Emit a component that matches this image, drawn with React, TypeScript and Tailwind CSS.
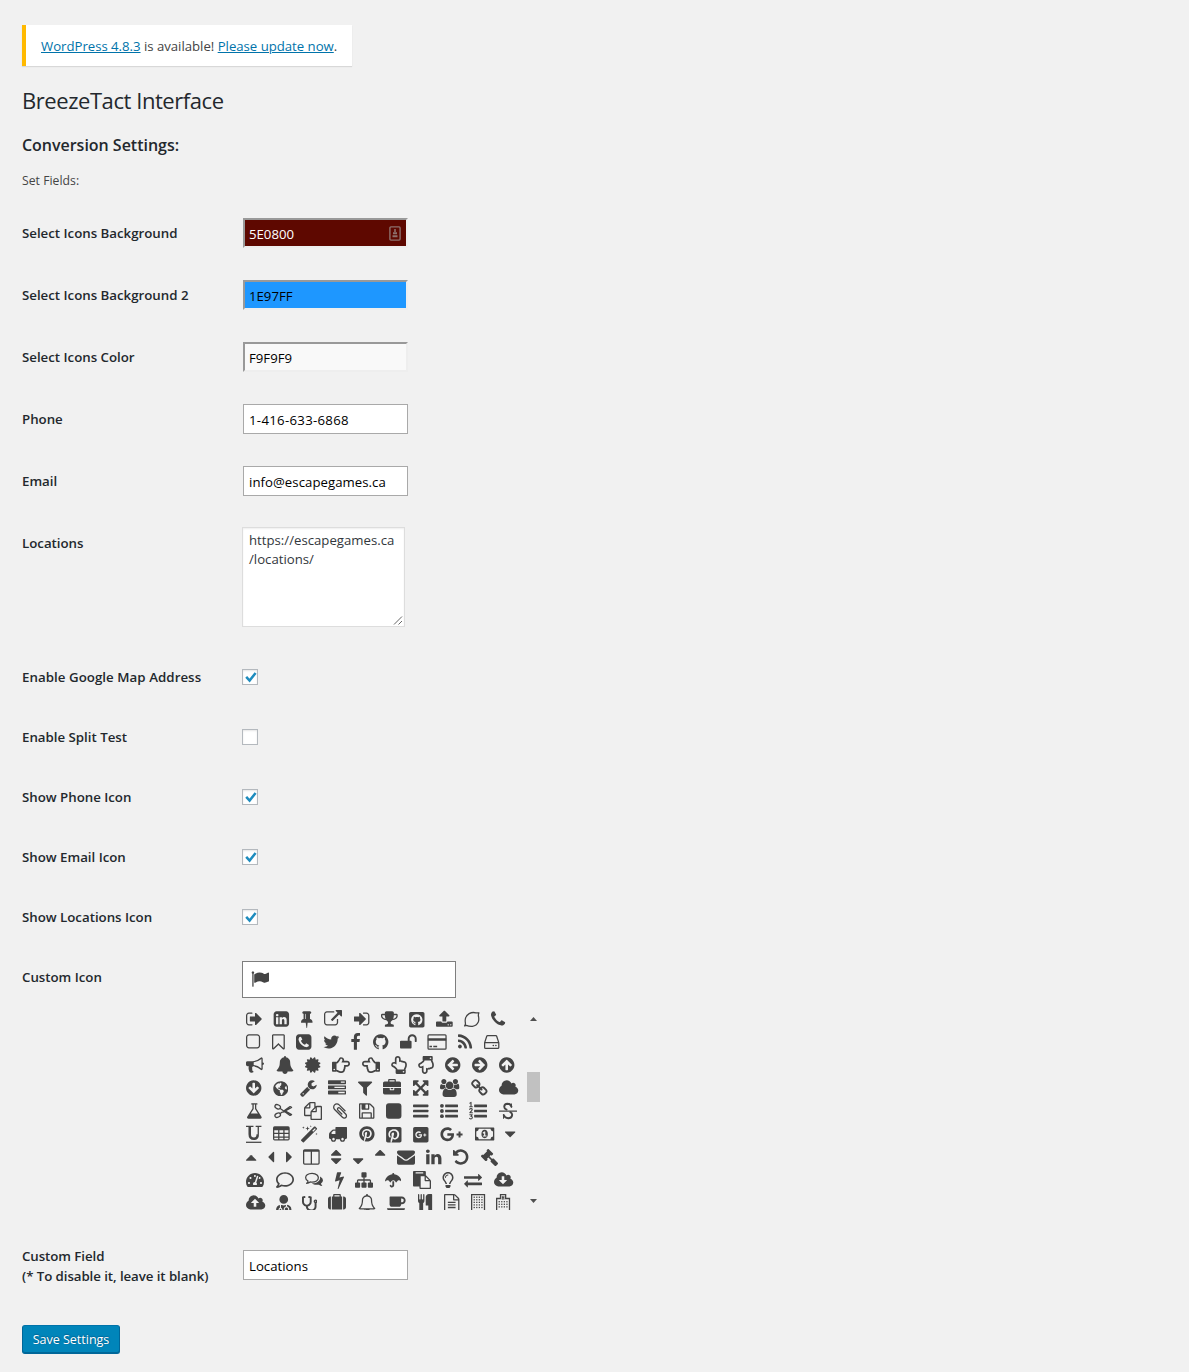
import React from "react";
import {
  FaGithubSquare, FaRegHandPointRight, FaRegHandPointLeft, FaRegHandPointUp, FaRegHandPointDown,
  FaGlobeAmericas, FaPinterest, FaPinterestSquare, FaGooglePlusSquare, FaGooglePlusG, FaGavel,
  FaTachometerAlt, FaRegComment, FaUmbrella, FaRegLightbulb, FaUserMd, FaStethoscope,
} from "react-icons/fa";

type Glyph = { w: number; x?: number; d?: string; node?: React.ReactNode; lib?: React.ReactNode };

const UNIT = 18 / 1792;
const CIRCLE = "M1664 896q0 209-103 385.5t-279.5 279.5-385.500 103-385.500-103-279.500-279.500-103-385.500 103-385.500 279.500-279.500 385.500-103 385.500 103 279.500 279.500 103 385.500z";
const CIRCLE_ARROW = "M1408 960v-128q0-26-19-45t-45-19h-502l189-189q19-19 19-45t-19-45l-91-91q-18-18-45-18t-45 18l-362 362-91 91q-18 18-18 45t18 45l91 91 362 362q18 18 45 18t45-18l91-91q18-18 18-45t-18-45l-189-189h502q26 0 45-19t19-45z" + CIRCLE;
const circleArrow = (deg: number): Glyph => ({ w: 1536, node: <path fillRule="evenodd" d={CIRCLE_ARROW} transform={`rotate(${deg} 896 896)`} /> });
const CLOUD = "M1856 1152q0 159-112.5 271.5t-271.5 112.5h-1088q-185 0-316.5-131.5t-131.5-316.5q0-130 70-240t188-165q-2-30-2-43 0-212 150-362t362-150q156 0 285.500 87t188.500 231q71-62 166-62 106 0 181 75t75 181q0 76-41 138 130 31 213.500 135.500t83.500 238.500z";
const SORT_DOWN = "M1408 1088q0 26-19 45l-448 448q-19 19-45 19t-45-19l-448-448q-19-19-19-45t19-45 45-19h896q26 0 45 19t19 45z";
const SORT_UP = "M1408 704q0 26-19 45t-45 19h-896q-26 0-45-19t-19-45 19-45l448-448q19-19 45-19t45 19l448 448q19 19 19 45z";
const FLAG = "M320 256q0 72-64 110v1266q0 13-9.5 22.5t-22.5 9.5h-64q-13 0-22.5-9.5t-9.5-22.5v-1266q-64-38-64-110 0-53 37.5-90.5t90.500-37.500 90.500 37.500 37.500 90.500zm1472 64v763q0 25-12.500 38.500t-39.500 27.500q-215 116-369 116-61 0-123.500-22t-108.500-48-115.500-48-142.500-22q-192 0-464 146-17 9-33 9-26 0-45-19t-19-45v-742q0-32 31-55 21-14 79-43 236-120 421-120 107 0 200 29t219 88q38 19 88 19 54 0 117.500-21t110-47 88-47 54.500-21q26 0 45 19t19 45z";
const BELL_BODY = "M1728 1408q0 52-38 90t-90 38h-448q0 106-75 181t-181 75-181-75-75-181h-448q-52 0-90-38t-38-90q50-42 91-88t85-119.5 74.5-158.5 50-206 19.5-260q0-152 117-282.5t307-158.5q-8-19-8-39 0-40 28-68t68-28 68 28 28 68q0 20-8 39 190 28 307 158.5t117 282.5q0 139 19.5 260t50 206 74.5 158.5 85 119.5 91 88z";
const BELL_CLAPPER = "M912 1696q0-16-16-16-59 0-101.5-42.5t-42.5-101.5q0-16-16-16t-16 16q0 73 51.5 124.5t124.5 51.5q16 0 16-16z";
const stroke = { fill: "none", stroke: "currentColor", strokeWidth: 125, strokeLinejoin: "round" as const, strokeLinecap: "round" as const };

const windows = (xs: number[], ys: number[]) =>
  ys.flatMap((y) => xs.map((x) => <rect key={`${x}-${y}`} x={x} y={y} width="128" height="128" />));

const rows: Glyph[][] = [
  [
    { w: 1568, x: 64, d: "M704 1440q0 4 1 20t.5 26.5-3 23.5-10 19.5-20.5 6.5h-320q-119 0-203.5-84.5t-84.5-203.5v-704q0-119 84.5-203.5t203.5-84.5h320q13 0 22.5 9.5t9.5 22.5q0 4 1 20t.5 26.5-3 23.5-10 19.5-20.5 6.5h-320q-66 0-113 47t-47 113v704q0 66 47 113t113 47h312l11.5 1 11.5 3 8 5.5 7 9 2 13.500zm928-544q0 26-19 45l-544 544q-19 19-45 19t-45-19-19-45v-288h-448q-26 0-45-19t-19-45v-384q0-26 19-45t45-19h448v-288q0-26 19-45t45-19 45 19l544 544q19 19 19 45z" },
    { w: 1600, x: 64, d: "M365 1414h231v-694h-231v694zm246-908q-1-52-36-86t-93-34-94.5 34-36.5 86q0 51 35.5 85.5t92.5 34.5h1q59 0 95-34.5t36-85.5zm585 908h231v-398q0-154-73-233t-193-79q-136 0-209 117h2v-101h-231q3 66 0 694h231v-388q0-38 7-56 15-35 45-59.5t74-24.5q116 0 116 157v371zm468-998v960q0 119-84.5 203.5t-203.500 84.500h-960q-119 0-203.500-84.500t-84.500-203.500v-960q0-119 84.500-203.500t203.500-84.500h960q119 0 203.500 84.500t84.500 203.500z" },
    { w: 1152, d: "M800 864v-448q0-14-9-23t-23-9-23 9-9 23v448q0 14 9 23t23 9 23-9 9-23zm672 352q0 26-19 45t-45 19h-429l-51 483q-2 12-10.5 20.5t-20.500 8.500h-1q-27 0-32-27l-76-485h-404q-26 0-45-19t-19-45q0-123 78.500-221.500t177.500-98.500v-512q-52 0-90-38t-38-90 38-90 90-38h640q52 0 90 38t38 90-38 90-90 38v512q99 0 177.500 98.500t78.500 221.500z" },
    { w: 1792, d: "M1408 928v320q0 119-84.5 203.5t-203.5 84.5h-832q-119 0-203.500-84.500t-84.500-203.500v-832q0-119 84.500-203.500t203.500-84.500h704q14 0 23 9t9 23v64q0 14-9 23t-23 9h-704q-66 0-113 47t-47 113v832q0 66 47 113t113 47h832q66 0 113-47t47-113v-320q0-14 9-23t23-9h64q14 0 23 9t9 23zm384-864v512q0 26-19 45t-45 19-45-19l-176-176-652 652q-10 10-23 10t-23-10l-114-114q-10-10-10-23t10-23l652-652-176-176q-19-19-19-45t19-45 45-19h512q26 0 45 19t19 45z" },
    { w: 1536, d: "M1312 896q0 26-19 45l-544 544q-19 19-45 19t-45-19-19-45v-288h-448q-26 0-45-19t-19-45v-384q0-26 19-45t45-19h448v-288q0-26 19-45t45-19 45 19l544 544q19 19 19 45zm352-352v704q0 119-84.5 203.5t-203.5 84.5h-320q-13 0-22.5-9.5t-9.500-22.500q0-4-1-20t-.5-26.5 3-23.500 10-19.500 20.500-6.500h320q66 0 113-47t47-113v-704q0-66-47-113t-113-47h-312l-11.500-1-11.500-3-8-5.500-7-9-2-13.500q0-4-1-20t-.5-26.500 3-23.500 10-19.500 20.500-6.500h320q119 0 203.500 84.500t84.500 203.500z" },
    { w: 1664, d: "M522 883q-74-162-74-371h-256v96q0 78 94.5 162t235.5 113zm1078-275v-96h-256q0 209-74 371 141-29 235.5-113t94.5-162zm128-128v128q0 71-41.5 143t-112 130-173 97.5-215.5 44.5q-42 54-95 95-38 34-52.5 72.500t-14.500 89.500q0 54 30.500 91t97.500 37q75 0 133.500 45.500t58.500 114.500v64q0 14-9 23t-23 9h-832q-14 0-23-9t-9-23v-64q0-69 58.500-114.500t133.500-45.500q67 0 97.500-37t30.500-91q0-51-14.500-89.500t-52.500-72.500q-53-41-95-95-113-5-215.500-44.500t-173-97.500-112-130-41.500-143v-128q0-40 28-68t68-28h288v-96q0-66 47-113t113-47h576q66 0 113 47t47 113v96h288q40 0 68 28t28 68z" },
    { w: 1536, lib: <FaGithubSquare size={17.6} /> },
    { w: 1664, d: "M1344 1472q0-26-19-45t-45-19-45 19-19 45 19 45 45 19 45-19 19-45zm256 0q0-26-19-45t-45-19-45 19-19 45 19 45 45 19 45-19 19-45zm128-224v320q0 40-28 68t-68 28h-1472q-40 0-68-28t-28-68v-320q0-40 28-68t68-28h427q21 56 70.500 92t110.500 36h256q61 0 110.500-36t70.500-92h427q40 0 68 28t28 68zm-325-648q-17 40-59 40h-256v448q0 26-19 45t-45 19h-256q-26 0-45-19t-19-45v-448h-256q-42 0-59-40-17-39 14-69l448-448q18-19 45-19t45 19l448 448q31 30 14 69z" },
    { w: 1536, node: <path {...stroke} d="M190 1590q90-70 180-60q250 110 600 90q420-50 580-420q100-300 10-600q-20-140 50-330q-120 50-290 10q-370-90-680 80q-300 170-370 500q-50 220 0 450q10 150-80 280z" /> },
    { w: 1408, d: "M1600 1240q0 27-10 70.5t-21 68.5q-21 50-122 106-94 51-186 51-27 0-53-3.5t-57.500-12.500-47-14.500-55.500-20.500-49-18q-98-35-175-83-127-79-264-216t-216-264q-48-77-83-175-3-9-18-49t-20.500-55.500-14.500-47-12.500-57.500-3.500-53q0-92 51-186 56-101 106-122 25-11 68.500-21t70.500-10q14 0 21 3 18 6 53 76 11 19 30 54t35 63.500 31 53.500q3 4 17.500 25t21.500 35.500 7 28.500q0 20-28.500 50t-62 55-62 53-28.500 46q0 9 5 22.500t8.500 20.500 14 24 11.500 19q76 137 174 235t235 174q2 1 19 11.500t24 14 20.500 8.500 22.500 5q18 0 46-28.500t53-62 55-62 50-28.500q14 0 28.500 7t35.500 21.500 25 17.500q25 15 53.500 31t63.500 35 54 30q70 35 76 53 3 7 3 21z" },
  ],
  [
    { w: 1408, d: "M1312 256h-832q-66 0-113 47t-47 113v832q0 66 47 113t113 47h832q66 0 113-47t47-113v-832q0-66-47-113t-113-47zm288 160v832q0 119-84.5 203.5t-203.5 84.5h-832q-119 0-203.500-84.500t-84.500-203.500v-832q0-119 84.500-203.500t203.500-84.500h832q119 0 203.500 84.500t84.500 203.500z" },
    { w: 1280, d: "M1408 256h-1024v1242l423-406 89-85 89 85 423 406v-1242zm12-128q23 0 44 9 33 13 52.5 41t19.5 62v1289q0 34-19.5 62t-52.5 41q-19 8-44 8-48 0-83-32l-441-424-441 424q-36 33-83 33-23 0-44-9-33-13-52.500-41t-19.500-62v-1289q0-34 19.500-62t52.500-41q21-9 44-9h1048z" },
    { w: 1536, d: "M1408 1193q0-11-2-16t-18-16.5-40.500-25-47.500-26.500-45.500-25-28.500-15q-5-3-19-13t-25-15-21-5q-15 0-36.500 20.500t-39.500 45-38.500 45-33.500 20.500q-7 0-16.500-3.500t-15.500-6.500-17-9.500-14-8.500q-99-55-170-126.500t-127-170.500q-2-3-8.500-14t-9.500-17-6.500-15.500-3.500-16.500q0-13 20.500-33.500t45-38.500 45-39.500 20.500-36.500q0-10-5-21t-15-25-13-19q-3-6-15-28.500t-25-45.500-26.500-47.500-25-40.500-16.500-18-16-2q-48 0-101 22-46 21-80 94.500t-34 130.500q0 16 2.500 34t5 30.500 9 33 10 29.500 12.500 33 11 30q60 164 216.500 320.500t320.500 216.500q6 2 30 11t33 12.500 29.500 10 33 9 30.500 5 34 2.500q57 0 130.500-34t94.500-80q22-53 22-101zm256-777v960q0 119-84.500 203.500t-203.500 84.500h-960q-119 0-203.500-84.500t-84.500-203.500v-960q0-119 84.500-203.500t203.500-84.500h960q119 0 203.500 84.500t84.500 203.500z" },
    { w: 1664, d: "M1684 408q-67 98-162 167 1 14 1 42 0 130-38 259.500t-115.500 248.500-184.500 210.500-258 146-323 54.500q-271 0-496-145 35 4 78 4 225 0 401-138-105-2-188-64.500t-114-159.500q33 5 61 5 43 0 85-11-112-23-185.500-111.500t-73.500-205.500v-4q68 38 146 41-66-44-105-115t-39-154q0-88 44-163 121 149 294.500 238.500t371.500 99.500q-8-38-8-74 0-134 94.500-228.500t228.500-94.500q140 0 236 102 109-21 205-78-37 115-142 178 93-10 186-50z" },
    { w: 1024, x: 448, d: "M1343 12v264h-157q-86 0-116 36t-30 108v189h293l-39 296h-254v759h-306v-759h-255v-296h255v-218q0-186 104-288.5t277-102.5q147 0 228 12z" },
    { w: 1536, d: "M896 128q209 0 385.5 103t279.5 279.5 103 385.5q0 251-146.5 451.5t-378.5 277.5q-27 5-40-7t-13-30q0-3 .5-76.5t.5-134.5q0-97-52-142 57-6 102.5-18t94-39 81-66.5 53-105 20.5-150.5q0-119-79-206 37-91-8-204-28-9-81 11t-92 44l-38 24q-93-26-192-26t-192 26q-16-11-42.5-27t-83.500-38.500-85-13.500q-45 113-8 204-79 87-79 206 0 85 20.500 150t52.500 105 80.500 67 94 39 102.500 18q-39 36-49 103-21 10-45 15t-57 5-65.500-21.500-55.500-62.500q-19-32-48.500-52t-49.500-24l-20-3q-21 0-29 4.500t-5 11.500 9 14 13 12l7 5q22 10 43.500 38t31.500 51l10 23q13 38 44 61.500t67 30 69.500 7 55.500-3.500l23-4q0 38 .5 88.500t.5 54.500q0 18-13 30t-40 7q-232-77-378.500-277.500t-146.500-451.500q0-209 103-385.500t279.500-279.500 385.500-103z" },
    { w: 1664, x: 0, d: "M1664 576v256q0 26-19 45t-45 19h-64q-26 0-45-19t-19-45v-256q0-106-75-181t-181-75-181 75-75 181v192h96q40 0 68 28t28 68v576q0 40-28 68t-68 28h-960q-40 0-68-28t-28-68v-576q0-40 28-68t68-28h672v-192q0-185 131.500-316.500t316.500-131.500 316.500 131.500 131.500 316.500z" },
    { w: 1820, node: <><rect x="-10" y="192" width="1792" height="1408" rx="90" {...stroke} /><path d="M-30 512h1832v256H-30zM128 1280h256v128H128zM512 1280h384v128H512z" /></> },
    { w: 1408, d: "M576 1344q0 80-56 136t-136 56-136-56-56-136 56-136 136-56 136 56 56 136zm512 123q2 28-17 48-18 21-47 21h-135q-25 0-43-16.5t-20-41.5q-22-229-184.5-391.5t-391.500-184.500q-25-2-41.500-20t-16.500-43v-135q0-29 21-47 17-17 43-17h5q160 13 306 80.500t259 181.500q114 113 181.500 259t80.500 306zm512 2q2 27-18 47-18 20-46 20h-143q-26 0-44.500-17.500t-19.500-42.500q-12-215-101-408.500t-231.500-336-336-231.500-408.500-102q-25-1-42.500-19.500t-17.500-43.500v-143q0-28 20-46 18-18 44-18h3q262 13 501.500 120t425.500 294q187 186 294 425.500t120 501.500z" },
    { w: 1536, node: <><path {...stroke} d="M192 960l210-640q20-64 90-64h808q70 0 90 64l210 640v480q0 96-96 96H288q-96 0-96-96zM192 960h1408" /><circle cx="1056" cy="1248" r="80" /><circle cx="1312" cy="1248" r="80" /></> },
  ],
  [
    { w: 1792, d: "M1664 640q53 0 90.5 37.5t37.5 90.5-37.5 90.5-90.5 37.5v384q0 52-38 90t-90 38q-417-347-812-380-58 19-91 66t-31 100.5 40 92.5q-20 33-23 65.5t6 58 33.5 55 48 50 61.5 50.500q-29 58-111.500 83t-168.500 11.500-132-55.500q-7-23-29.500-87.500t-32-94.500-23-89-15-101 3.500-98.500 22-110.500h-122q-66 0-113-47t-47-113v-192q0-66 47-113t113-47h480q435 0 896-384 52 0 90 38t38 90v384zm-128 604v-954q-394 302-768 343v270q377 42 768 341z" },
    { w: 1792, d: BELL_BODY },
    { w: 1536, d: "M1504 896l138 135q30 28 20 70-12 41-52 51l-188 48 53 186q12 41-19 70-29 31-70 19l-186-53-48 188q-10 40-51 52-12 2-19 2-31 0-51-22l-135-138-135 138q-28 30-70 20-41-11-51-52l-48-188-186 53q-41 12-70-19-31-29-19-70l53-186-188-48q-40-10-52-51-10-42 20-70l138-135-138-135q-30-28-20-70 12-41 52-51l188-48-53-186q-12-41 19-70 29-31 70-19l186 53 48-188q10-41 51-51 41-12 70 19l135 139 135-139q29-30 70-19 41 10 51 51l48 188 186-53q41-12 70 19 31 29 19 70l-53 186 188 48q40 10 52 51 10 42-20 70z" },
    { w: 1792, lib: <FaRegHandPointRight size={18} /> },
    { w: 1792, lib: <FaRegHandPointLeft size={18} /> },
    { w: 1536, lib: <FaRegHandPointUp size={18} /> },
    { w: 1536, lib: <FaRegHandPointDown size={18} /> },
    circleArrow(0), circleArrow(180), circleArrow(90),
  ],
  [
    circleArrow(270),
    { w: 1536, lib: <FaGlobeAmericas size={15.6} /> },
    { w: 1664, d: "M448 1472q0-26-19-45t-45-19-45 19-19 45 19 45 45 19 45-19 19-45zm644-420l-682 682q-37 37-90 37-52 0-91-37l-106-108q-38-36-38-90 0-53 38-91l681-681q39 98 114.5 173.5t173.5 114.5zm634-435q0 39-23 106-47 134-164.5 217.5t-258.5 83.500q-185 0-316.500-131.500t-131.500-316.500 131.500-316.500 316.500-131.500q58 0 121.500 16.500t107.500 46.500q16 11 16 28t-16 28l-293 169v224l193 107q5-3 79-48.500t135.500-81 70.500-35.500q15 0 23.500 10t8.500 25z" },
    { w: 1792, d: "M1024 1408h640v-128h-640v128zm-384-512h1024v-128h-1024v128zm640-512h384v-128h-384v128zm512 832v256q0 26-19 45t-45 19h-1664q-26 0-45-19t-19-45v-256q0-26 19-45t45-19h1664q26 0 45 19t19 45zm0-512v256q0 26-19 45t-45 19h-1664q-26 0-45-19t-19-45v-256q0-26 19-45t45-19h1664q26 0 45 19t19 45zm0-512v256q0 26-19 45t-45 19h-1664q-26 0-45-19t-19-45v-256q0-26 19-45t45-19h1664q26 0 45 19t19 45z" },
    { w: 1408, d: "M1595 295q17 41-14 70l-493 493v742q0 42-39 59-13 5-25 5-27 0-45-19l-256-256q-19-19-19-45v-486l-493-493q-31-29-14-70 17-39 59-39h1280q42 0 59 39z" },
    { w: 1792, d: "M640 256h512v-128h-512v128zm1152 640v480q0 66-47 113t-113 47h-1472q-66 0-113-47t-47-113v-480h672v160q0 26 19 45t45 19h320q26 0 45-19t19-45v-160h672zm-768 0v128h-256v-128h256zm768-480v384h-1792v-384q0-66 47-113t113-47h352v-160q0-40 28-68t68-28h576q40 0 68 28t28 68v160h352q66 0 113 47t47 113z" },
    { w: 1536, d: "M1411 541l-355 355 355 355 144-144q29-31 70-14 39 17 39 59v448q0 26-19 45t-45 19h-448q-42 0-59-40-17-39 14-69l144-144-355-355-355 355 144 144q31 30 14 69-17 40-59 40h-448q-26 0-45-19t-19-45v-448q0-42 40-59 39-17 69 14l144 144 355-355-355-355-144 144q-19 19-45 19-12 0-24-5-40-17-40-59v-448q0-26 19-45t45-19h448q42 0 59 40 17 39-14 69l-144 144 355 355 355-355-144-144q-31-30-14-69 17-40 59-40h448q26 0 45 19t19 45v448q0 42-39 59-13 5-25 5-26 0-45-19z" },
    { w: 1920, d: "M529 896q-162 5-265 128h-134q-82 0-138-40.500t-56-118.500q0-353 124-353 6 0 43.500 21t97.500 42.500 119 21.500q67 0 133-23-5 37-5 66 0 159 81 286zm1071 637q0 120-73 189.500t-194 69.500h-874q-121 0-194-69.500t-73-189.500q0-53 3.500-103.500t14-109 26.500-108.500 43-97.500 62-81 85.500-53.500 111.500-20q10 0 43 21.500t73 48 107 48 135 21.500 135-21.500 107-48 73-48 43-21.500q61 0 111.500 20t85.500 53.500 62 81 43 97.500 26.500 108.500 14 109 3.500 103.500zm-1024-1277q0 106-75 181t-181 75-181-75-75-181 75-181 181-75 181 75 75 181zm704 384q0 159-112.500 271.500t-271.500 112.500-271.500-112.500-112.500-271.500 112.500-271.500 271.500-112.500 271.500 112.500 112.500 271.500zm576 225q0 78-56 118.500t-138 40.500h-134q-103-123-265-128 81-127 81-286 0-29-5-66 66 23 133 23 59 0 119-21.500t97.500-42.500 43.500-21q124 0 124 353zm-128-609q0 106-75 181t-181 75-181-75-75-181 75-181 181-75 181 75 75 181z" },
    { w: 1664, d: "M1520 1216q0-40-28-68l-208-208q-28-28-68-28-42 0-72 32 3 3 19 18.500t21.500 21.500 15 19 13 25.500 3.500 27.500q0 40-28 68t-68 28q-15 0-27.500-3.500t-25.500-13-19-15-21.500-21.500-18.500-19q-33 31-33 73 0 40 28 68l206 207q27 27 68 27 40 0 68-26l147-146q28-28 28-67zm-703-705q0-40-28-68l-206-207q-28-28-68-28-39 0-68 27l-147 146q-28 28-28 67 0 40 28 68l208 208q27 27 68 27 42 0 72-31-3-3-19-18.500t-21.500-21.500-15-19-13-25.500-3.500-27.500q0-40 28-68t68-28q15 0 27.500 3.500t25.500 13 19 15 21.500 21.500 18.500 19q33-31 33-73zm895 705q0 120-85 203l-147 146q-83 83-203 83-121 0-204-85l-206-207q-83-83-83-203 0-123 88-209l-88-88q-86 88-208 88-120 0-204-84l-208-208q-84-84-84-204t85-203l147-146q83-83 203-83 121 0 204 85l206 207q83 83 83 203 0 123-88 209l88 88q86-88 208-88 120 0 204 84l208 208q84 84 84 204z" },
    { w: 1920, d: CLOUD },
  ],
  [
    { w: 1664, d: "M1591 1448q56 89 21.5 152.5t-140.5 63.5h-1152q-106 0-140.5-63.5t21.5-152.5l503-793v-399h-64q-26 0-45-19t-19-45 19-45 45-19h512q26 0 45 19t19 45-19 45-45 19h-64v399zm-779-725l-272 429h712l-272-429-20-31v-436h-128v436z" },
    { w: 1792, node: <g {...stroke}><ellipse cx="370" cy="480" rx="290" ry="200" transform="rotate(25 370 480)" /><ellipse cx="370" cy="1312" rx="290" ry="200" transform="rotate(-25 370 1312)" /><path d="M620 640L1600 1340l150-80L1060 850M620 1152L1600 452l150 80L900 1010" /></g> },
    { w: 1792, d: "M1696 384q40 0 68 28t28 68v1216q0 40-28 68t-68 28h-960q-40 0-68-28t-28-68v-288h-544q-40 0-68-28t-28-68v-672q0-40 20-88t48-76l408-408q28-28 76-48t88-20h416q40 0 68 28t28 68v328q68-40 128-40h416zm-544 213l-299 299h299v-299zm-640-384l-299 299h299v-299zm196 647l316-316v-416h-384v416q0 40-28 68t-68 28h-416v640h512v-256q0-40 20-88t48-76zm956 804v-1152h-384v416q0 40-28 68t-68 28h-416v640h896z" },
    { w: 1408, d: "M1596 1385q0 117-79 196t-196 79q-135 0-235-100l-777-776q-113-115-113-271 0-159 110-270t269-111q158 0 273 113l605 606q10 10 10 22 0 16-30.5 46.5t-46.5 30.5q-13 0-23-10l-606-607q-79-77-181-77-106 0-179 75t-73 181q0 105 76 181l776 777q63 63 145 63 64 0 106-42t42-106q0-82-63-145l-581-581q-26-24-60-24-29 0-48 19t-19 48q0 32 25 59l410 410q10 10 10 22 0 16-31 47t-47 31q-12 0-22-10l-410-410q-63-61-63-149 0-82 57-139t139-57q88 0 149 63l581 581q100 98 100 235z" },
    { w: 1536, d: "M512 1536h768v-384h-768v384zm896 0h128v-896q0-14-10-38.500t-20-34.500l-281-281q-10-10-34-20t-39-10v416q0 40-28 68t-68 28h-576q-40 0-68-28t-28-68v-416h-128v1280h128v-416q0-40 28-68t68-28h832q40 0 68 28t28 68v416zm-384-928v-320q0-13-9.500-22.500t-22.500-9.500h-192q-13 0-22.500 9.500t-9.500 22.500v320q0 13 9.500 22.500t22.500 9.500h192q13 0 22.500-9.500t9.500-22.500zm640 32v928q0 40-28 68t-68 28h-1344q-40 0-68-28t-28-68v-1344q0-40 28-68t68-28h928q40 0 88 20t76 48l280 280q28 28 48 76t20 88z" },
    { w: 1536, node: <rect x="128" y="128" width="1536" height="1536" rx="288" /> },
    { w: 1536, node: <>{[256, 768, 1280].map((y) => <rect key={y} x="128" y={y} width="1536" height="256" rx="64" />)}</> },
    { w: 1792, node: <>{[384, 896, 1408].map((y) => <g key={y}><circle cx="192" cy={y} r="192" /><rect x="512" y={y - 128} width="1280" height="256" rx="32" /></g>)}</> },
    { w: 1792, node: <>
      {[384, 896, 1408].map((y) => <rect key={y} x="512" y={y - 128} width="1280" height="256" rx="32" />)}
      <path {...stroke} strokeWidth="110" d="M90 110l110-70v430M70 480h260M70 740q20-90 130-90t120 90q0 80-230 330h250M80 1270h240l-130 160q150 0 140 140q-20 120-140 120q-80 0-130-60" />
    </> },
    { w: 1792, node: <>
      <rect x="0" y="850" width="1792" height="120" rx="32" />
      <path {...stroke} strokeWidth="190" d="M1240 470q-80-300-390-300q-320 10-330 300q0 190 230 290M1130 1010q180 80 180 270q-20 330-410 330q-330 0-430-310" />
      <path d="M1190 150h100v400h-100zM400 1220h100v440H400z" />
    </> },
  ],
  [
    { w: 1536, node: <>
      <rect x="128" y="1660" width="1536" height="125" />
      <path {...stroke} strokeWidth="250" strokeLinecap="butt" d="M500 130v790q0 450 420 450q380 0 380-450" />
      <path {...stroke} strokeWidth="130" strokeLinecap="butt" d="M1350 130v810" />
      <path d="M130 70h740v120H130zM1090 70h574v120h-574z" />
    </> },
    { w: 1664, node: <path fillRule="evenodd" d="M224 128h1344q160 0 160 160v1088q0 160-160 160H224q-160 0-160-160V288q0-160 160-160zM192 512v256h384V512zM704 512v256h384V512zM1216 512v256h384V512zM192 896v256h384V896zM704 896v256h384V896zM1216 896v256h384V896zM192 1280v128h384v-128zM704 1280v128h384v-128zM1216 1280v128h384v-128z" /> },
    { w: 1664, node: <>
      <path fillRule="evenodd" d="M80 1460L1380 160q50-40 100 0l170 170q40 50 0 100L350 1730q-50 40-100 0L80 1560q-40-50 0-100zM1190 580l90 90 260-260-90-90z" />
      <path d="M300 128l30 100 100 30-100 30-30 100-30-100-100-30 100-30zM720 128l60 160 160 60-160 60-60 160-60-160-160-60 160-60zM1040 20l25 80 80 25-80 25-25 80-25-80-80-25 80-25zM1600 760l30 100 100 30-100 30-30 100-30-100-100-30 100-30z" />
    </> },
    { w: 1792, node: <path fillRule="evenodd" d="M640 256q0-64 64-64h1024q64 0 64 64v1024q0 130-192 128a256 256 0 0 1-512 0H704a256 256 0 0 1-512 0q-192 2-192-128V960q0-150 90-240l200-200q50-72 158-72h192zM256 896h384V576H450q-20 0-44 20L270 732q-14 14-14 44zM448 1280a128 128 0 1 0 .1 0zM1344 1280a128 128 0 1 0 .1 0z" /> },
    { w: 1536, lib: <FaPinterest size={15.8} /> },
    { w: 1536, lib: <FaPinterestSquare size={17.6} /> },
    { w: 1536, lib: <FaGooglePlusSquare size={17.6} /> },
    { w: 2304, lib: <FaGooglePlusG size={18.5} className="w-[23px]" /> },
    { w: 1920, node: <>
      <path fillRule="evenodd" d="M0 256h1792q64 0 64 64v1152q0 64-64 64H0q-64 0-64-64V320q0-64 64-64zM320 384Q300 620 64 640v512q236 20 256 256h1152q20-236 256-256V640q-236-20-256-256z" />
      <path fillRule="evenodd" d="M896 480q320 30 320 416t-320 416q-320-30-320-416t320-416zM840 650l-150 130 70 90 80-60v230H720v110h360v-110H960V650z" />
    </> },
    { w: 1024, d: "M1408 704q0 26-19 45l-448 448q-19 19-45 19t-45-19l-448-448q-19-19-19-45t19-45 45-19h896q26 0 45 19t19 45z" },
  ],
  [
    { w: 1024, d: "M1408 1216q0 26-19 45t-45 19h-896q-26 0-45-19t-19-45 19-45l448-448q19-19 45-19t45 19l448 448q19 19 19 45z" },
    { w: 640, x: 600, d: "M1216 448v896q0 26-19 45t-45 19-45-19l-448-448q-19-19-19-45t19-45l448-448q19-19 45-19t45 19 19 45z" },
    { w: 576, x: 576, d: "M1152 896q0 26-19 45l-448 448q-19 19-45 19t-45-19-19-45v-896q0-26 19-45t45-19 45 19l448 448q19 19 19 45z" },
    { w: 1664, d: "M224 1536h608v-1152h-640v1120q0 13 9.5 22.5t22.5 9.5zm1376-32v-1120h-640v1152h608q13 0 22.5-9.5t9.5-22.5zm128-1216v1216q0 66-47 113t-113 47h-1344q-66 0-113-47t-47-113v-1216q0-66 47-113t113-47h1344q66 0 113 47t47 113z" },
    { w: 1024, d: SORT_DOWN + SORT_UP },
    { w: 1024, d: SORT_DOWN },
    { w: 1024, d: SORT_UP },
    { w: 1792, d: "M1792 710v794q0 66-47 113t-113 47h-1472q-66 0-113-47t-47-113v-794q44 49 101 87 362 246 497 345 57 42 92.5 65.5t94.5 48 110 24.5h2q51 0 110-24.5t94.5-48 92.5-65.5q170-123 498-345 57-39 100-87zm0-294q0 79-49 151t-122 123q-376 261-468 325-10 7-42.500 30.500t-54 38-52 32.500-57.500 27-50 9h-2q-23 0-50-9t-57.500-27-52-32.500-54-38-42.500-30.500q-91-64-262-182.500t-205-142.500q-62-42-117-115.500t-55-136.500q0-78 41.500-130t118.500-52h1472q65 0 112.500 47t47.500 113z" },
    { w: 1536, d: "M477 625v991h-330v-991h330zm21-306q1 73-50.5 122t-135.5 49h-2q-82 0-132-49t-50-122q0-74 51.5-122.5t134.5-48.5 133 48.5 51 122.5zm1166 729v568h-329v-530q0-105-40.5-164.5t-126.500-59.500q-63 0-105.500 34.500t-63.500 85.500q-11 30-11 81v553h-329q2-399 2-647t-1-296l-1-48h329v144h-2q20-32 41-56t56.500-52 87-43.500 114.500-15.500q171 0 275 113.500t104 332.500z" },
    { w: 1536, d: "M1664 896q0 156-61 298t-164 245-245 164-298 61q-172 0-327-72.5t-264-204.5q-7-10-6.5-22.5t8.5-20.5l137-138q10-9 25-9 16 2 23 12 73 95 179 147t225 52q104 0 198.5-40.5t163.500-109.500 109.500-163.500 40.500-198.500-40.500-198.500-109.500-163.500-163.500-109.500-198.500-40.500q-98 0-188 35.500t-160 101.500l137 138q31 30 14 69-17 40-59 40h-448q-26 0-45-19t-19-45v-448q0-42 40-59 39-17 69 14l130 129q107-101 244.500-156.500t284.500-55.500q156 0 298 61t245 164 164 245 61 298z" },
    { w: 1792, lib: <FaGavel size={17} className="-scale-x-100" /> },
  ],
  [
    { w: 1792, lib: <FaTachometerAlt size={18} /> },
    { w: 1792, lib: <FaRegComment size={18} /> },
    { w: 1792, node: <>
      <path {...stroke} d="M700 230q330 0 500 170 130 130 130 270 0 200-190 330-170 110-440 110-110 0-190-20-130 110-340 140 110-90 130-230Q64 860 64 670q0-170 150-290 190-150 486-150z" />
      <path d="M1500 540q292 150 292 380 0 190-200 330 30 140 140 240-190-10-350-130-340 50-600-70-60-20-110-60 520 0 740-290 130-170 88-400z" />
    </> },
    { w: 896, x: 448, d: "M1333 566q18 20 7 44l-540 1157q-13 25-42 25-4 0-14-2-17-5-25.5-19t-4.5-30l197-808-406 101q-4 1-12 1-18 0-31-11-18-15-13-39l201-825q4-14 16-23t28-9h328q19 0 32 12.5t13 29.5q0 8-5 18l-171 463 396-98q8-2 12-2 19 0 34 15z" },
    { w: 1792, d: "M1792 1248v320q0 40-28 68t-68 28h-320q-40 0-68-28t-28-68v-320q0-40 28-68t68-28h96v-192h-512v192h96q40 0 68 28t28 68v320q0 40-28 68t-68 28h-320q-40 0-68-28t-28-68v-320q0-40 28-68t68-28h96v-192h-512v192h96q40 0 68 28t28 68v320q0 40-28 68t-68 28h-320q-40 0-68-28t-28-68v-320q0-40 28-68t68-28h96v-192q0-52 38-90t90-38h512v-192h-96q-40 0-68-28t-28-68v-320q0-40 28-68t68-28h320q40 0 68 28t28 68v320q0 40-28 68t-68 28h-96v192h512q52 0 90 38t38 90v192h96q40 0 68 28t28 68z" },
    { w: 1664, lib: <FaUmbrella size={16.5} /> },
    { w: 1792, d: "M768 1664h896v-640h-416q-40 0-68-28t-28-68v-416h-384v1152zm256-1440v-64q0-13-9.5-22.5t-22.5-9.5h-704q-13 0-22.5 9.5t-9.5 22.5v64q0 13 9.5 22.5t22.5 9.5h704q13 0 22.5-9.5t9.5-22.5zm256 672h299l-299-299v299zm512 128v672q0 40-28 68t-68 28h-960q-40 0-68-28t-28-68v-160h-544q-40 0-68-28t-28-68v-1344q0-40 28-68t68-28h1088q40 0 68 28t28 68v328q21 13 36 28l408 408q28 28 48 76t20 88z" },
    { w: 1024, lib: <FaRegLightbulb size={16} /> },
    { w: 1792, d: "M1792 1184v192q0 13-9.5 22.5t-22.5 9.5h-1376v192q0 13-9.5 22.5t-22.500 9.500q-12 0-24-10l-319-320q-9-9-9-22 0-14 9-23l320-320q9-9 23-9 13 0 22.500 9.500t9.500 22.500v192h1376q13 0 22.500 9.500t9.500 22.500zm0-544q0 14-9 23l-320 320q-9 9-23 9-13 0-22.500-9.500t-9.500-22.500v-192h-1376q-13 0-22.500-9.500t-9.500-22.500v-192q0-13 9.500-22.500t22.500-9.500h1376v-192q0-14 9-23t23-9q12 0 24 10l319 319q9 9 9 23z" },
    { w: 1920, d: "M1216 928q0-14-9-23t-23-9h-224v-352q0-13-9.5-22.5t-22.5-9.5h-192q-13 0-22.500 9.500t-9.500 22.500v352h-224q-13 0-22.500 9.500t-9.500 22.500q0 14 9 23l352 352q9 9 23 9t23-9l351-351q10-12 10-24z" + CLOUD },
  ],
  [
    { w: 1920, d: "M1216 864q0-14-9-23l-352-352q-9-9-23-9t-23 9l-351 351q-10 12-10 24 0 14 9 23t23 9h224v352q0 13 9.5 22.5t22.5 9.5h192q13 0 22.5-9.5t9.5-22.5v-352h224q13 0 22.5-9.5t9.5-22.5z" + CLOUD },
    { w: 1408, lib: <FaUserMd size={17.5} /> },
    { w: 1408, lib: <FaStethoscope size={15.5} /> },
    { w: 1792, d: "M640 256h512v-128h-512v128zm-352 0v1280h-64q-92 0-158-66t-66-158v-832q0-92 66-158t158-66h64zm1120 0v1280h-1024v-1280h128v-160q0-40 28-68t68-28h576q40 0 68 28t28 68v160h128zm384 224v832q0 92-66 158t-158 66h-64v-1280h64q92 0 158 66t66 158z" },
    { w: 1792, d: BELL_BODY + BELL_CLAPPER + "M246 1408h1300q-266-300-266-832 0-51-24-105t-69-103-121.5-80.5-169.5-31.5-169.5 31.5-121.5 80.5-69 103-24 105q0 532-266 832z" },
    { w: 1920, x: 0, d: "M1664 640q0-80-56-136t-136-56h-64v384h64q80 0 136-56t56-136zm-1664 768h1792q0 106-75 181t-181 75h-1280q-106 0-181-75t-75-181zm1856-768q0 159-112.5 271.5t-271.5 112.5h-64v32q0 92-66 158t-158 66h-704q-92 0-158-66t-66-158v-736q0-26 19-45t45-19h1152q159 0 271.5 112.5t112.5 271.5z" },
    { w: 1408, d: "M832 64v640q0 61-35.5 111t-92.5 70v779q0 52-38 90t-90 38h-128q-52 0-90-38t-38-90v-779q-57-20-92.5-70t-35.5-111v-640q0-26 19-45t45-19 45 19 19 45v416q0 26 19 45t45 19 45-19 19-45v-416q0-26 19-45t45-19 45 19 19 45v416q0 26 19 45t45 19 45-19 19-45v-416q0-26 19-45t45-19 45 19 19 45zm768 0v1600q0 52-38 90t-90 38h-128q-52 0-90-38t-38-90v-512h-224q-13 0-22.5-9.5t-9.500-22.500v-800q0-132 94-226t226-94h256q26 0 45 19t19 45z" },
    { w: 1536, d: "M1596 380q28 28 48 76t20 88v1152q0 40-28 68t-68 28h-1344q-40 0-68-28t-28-68v-1600q0-40 28-68t68-28h896q40 0 88 20t76 48zm-444-244v376h376q-10-29-22-41l-313-313q-12-12-41-22zm384 1528v-1024h-416q-40 0-68-28t-28-68v-416h-768v1536h1280zM512 768h768v128H512zM512 1024h768v128H512zM512 1280h768v128H512z" },
    { w: 1408, node: <><path fillRule="evenodd" d="M192 0h1408v1792H192zM320 128v1536h1152V128z" />{windows([448, 704, 960, 1216], [256, 512, 768, 1024, 1280])}</> },
    { w: 1408, node: <><path fillRule="evenodd" d="M576 0h640v384h384v1408H192V384h384zM704 128v384H320v1152h1152V512h-384V128z" /><path d="M768 192h96v128h64V192h96v384h-96V416h-64v160h-96z" />{windows([448, 704, 960, 1216], [704, 960, 1216])}</> },
  ],
];

function GlyphIcon({ g }: { g: Glyph }) {
  const width = g.w * UNIT;
  if (g.lib) {
    return <span className="flex h-[18px] shrink-0 items-center justify-center [&>svg]:shrink-0" style={{ width }}>{g.lib}</span>;
  }
  return (
    <svg className="h-[18px] shrink-0 overflow-visible" style={{ width }} viewBox={`${g.x ?? (1792 - g.w) / 2} 0 ${g.w} 1792`} fill="currentColor">
      {g.node ?? <path fillRule="evenodd" d={g.d} />}
    </svg>
  );
}

function Row({ label, h, top = "pt-[21px]", children }: { label: React.ReactNode; h: string; top?: string; children: React.ReactNode }) {
  return (
    <div className={`flex ${h}`}>
      <div className={`w-[220px] shrink-0 text-[13.3px] leading-5 font-semibold tracking-[-0.02px] text-[#23282d] ${top}`}>{label}</div>
      <div className="min-w-0">{children}</div>
    </div>
  );
}

const inputBase = "ml-px flex h-[30px] w-[165px] items-center text-[13.2px] leading-[18px]";

function ColorField({ value, tone, badge }: { value: string; tone: string; badge?: boolean }) {
  return (
    <div className={`${inputBase} mt-4 justify-between border-2 border-t-[#999] border-r-[#eee] border-b-[#eee] border-l-[#999] pt-0.5 pr-[5px] pl-1 ${tone}`}>
      <span>{value}</span>
      {badge && (
        <svg className="mb-0.5 h-[15px] w-3" viewBox="0 0 12 15" fill="none" stroke="#8d706c" strokeWidth="1.4">
          <rect x="0.9" y="0.9" width="10.2" height="13.2" rx="1" />
          <path d="M6 3v3" strokeWidth="1.6" />
          <path d="M4 7.300h4M3.500 10.300h5" strokeWidth="2" />
        </svg>
      )}
    </div>
  );
}

function TextField({ value, spacing }: { value: string; spacing: string }) {
  return <div className={`${inputBase} border border-[#a9a9a9] bg-white pt-0.5 pl-[5px] text-black ${spacing}`}>{value}</div>;
}

function Check({ on }: { on?: boolean }) {
  return (
    <div className="mt-[22px] flex size-4 items-center justify-center border border-[#b4b9be] bg-white shadow-[inset_0_1px_2px_rgba(0,0,0,0.1)]">
      {on && (
        <svg className="ml-px h-3 w-3" viewBox="0 0 12 12" fill="none" stroke="#1e8cbe" strokeWidth="2.5">
          <path d="M1.200 5.800l3.400 3.800L10.600 2" />
        </svg>
      )}
    </div>
  );
}

export default function App() {
  return (
    <div className="h-[1372px] w-full overflow-hidden bg-[#f1f1f1] pt-[25px] pl-[22px] font-['Open_Sans','Noto_Sans',sans-serif] text-[#444]">
      <div className="flex h-[41px] w-[330px] items-center border-l-4 border-[#ffb900] bg-white pt-0.5 pl-[15px] text-[13.2px] tracking-[-0.02px] whitespace-nowrap shadow-[0_1px_1px_rgba(0,0,0,0.1)]">
        <p>
          <a className="text-[#0073aa] underline">WordPress 4.8.3</a> is available! <a className="text-[#0073aa] underline">Please update now</a>.
        </p>
      </div>
      <h1 className="mt-[19px] text-[22px] leading-[30px] font-normal tracking-[-0.44px] text-[#23282d]">BreezeTact Interface</h1>
      <h2 className="mt-[18px] text-[16px] leading-6 font-semibold tracking-[-0.02px] text-[#23282d]">Conversion Settings:</h2>
      <p className="mt-3.5 mb-[11px] text-[12.2px] leading-5 tracking-[0.03px]">Set Fields:</p>

      <Row label="Select Icons Background" h="h-[62px]"><ColorField value="5E0800" tone="bg-[#5e0800] text-white" badge /></Row>
      <Row label="Select Icons Background 2" h="h-[62px]"><ColorField value="1E97FF" tone="bg-[#1e97ff] text-black" /></Row>
      <Row label="Select Icons Color" h="h-[62px]"><ColorField value="F9F9F9" tone="bg-[#f9f9f9] text-black" /></Row>
      <Row label="Phone" h="h-[62px]"><div className="pt-4"><TextField value="1-416-633-6868" spacing="tracking-[0.3px]" /></div></Row>
      <Row label="Email" h="h-[62px]"><div className="pt-4"><TextField value="info@escapegames.ca" spacing="tracking-[0.05px]" /></div></Row>
      <Row label="Locations" h="h-[135px]">
        <div className="relative mt-[15px] h-[100px] w-[163px] border border-[#ddd] bg-white px-1.5 pt-[3px] text-[13.2px] leading-[19px] text-[#32373c] shadow-[inset_0_1px_2px_rgba(0,0,0,0.07)]">
          https://escapegames.ca<br />/locations/
          <svg className="absolute right-px bottom-px size-2.5" viewBox="0 0 10 10" stroke="#555" strokeWidth="0.9">
            <path d="M1 9.500L9 1.500M5.500 9.500L9 6" />
          </svg>
        </div>
      </Row>
      <Row label={<span className="tracking-[0.04px]">Enable Google Map Address</span>} h="h-[60px]" top="pt-5"><Check on /></Row>
      <Row label="Enable Split Test" h="h-[60px]" top="pt-5"><Check /></Row>
      <Row label="Show Phone Icon" h="h-[60px]" top="pt-5"><Check on /></Row>
      <Row label="Show Email Icon" h="h-[60px]" top="pt-5"><Check on /></Row>
      <Row label="Show Locations Icon" h="h-[60px]" top="pt-5"><Check on /></Row>
      <Row label="Custom Icon" h="h-[279px]" top="pt-5">
        <div className="mt-3.5 flex h-[37px] w-[214px] items-center border border-[#7e7e7e] bg-white pb-0.5 pl-2">
          <GlyphIcon g={{ w: 1792, d: FLAG }} />
        </div>
        <div className="mt-3 flex h-[200px] w-[298px] justify-between overflow-hidden">
          <div className="flex flex-col gap-[5px] pt-[0.4px] pl-1">
            {rows.map((row, i) => (
              <div key={i} className="flex gap-[11.55px]">
                {row.map((g, j) => <GlyphIcon key={j} g={g} />)}
              </div>
            ))}
          </div>
          <div className="flex w-[13px] flex-col items-center">
            <svg className="mt-[7px] h-1 w-[7px]" viewBox="0 0 7 4"><path d="M0 4L3.500 0L7 4z" fill="#505050" /></svg>
            <div className="mt-[51px] h-[30px] w-[13px] bg-[#c1c1c1]" />
            <svg className="mt-[97px] h-1 w-[7px]" viewBox="0 0 7 4"><path d="M0 0L3.500 4L7 0z" fill="#505050" /></svg>
          </div>
        </div>
      </Row>
      <Row label={<div className="tracking-[-0.08px]">Custom Field<br />(* To disable it, leave it blank)</div>} h="h-[99px]" top="pt-5">
        <div className="pt-6"><TextField value="Locations" spacing="tracking-[0.02px]" /></div>
      </Row>
      <button className="flex h-[29px] w-[98px] items-center justify-center rounded-[3px] border border-[#006799] border-t-[#0073aa] bg-[#0085ba] pt-px text-[12.6px] tracking-[-0.05px] text-white shadow-[inset_0_-1px_0_#006799] [text-shadow:0_-1px_1px_#006799,1px_0_1px_#006799]">
        Save Settings
      </button>
    </div>
  );
}
